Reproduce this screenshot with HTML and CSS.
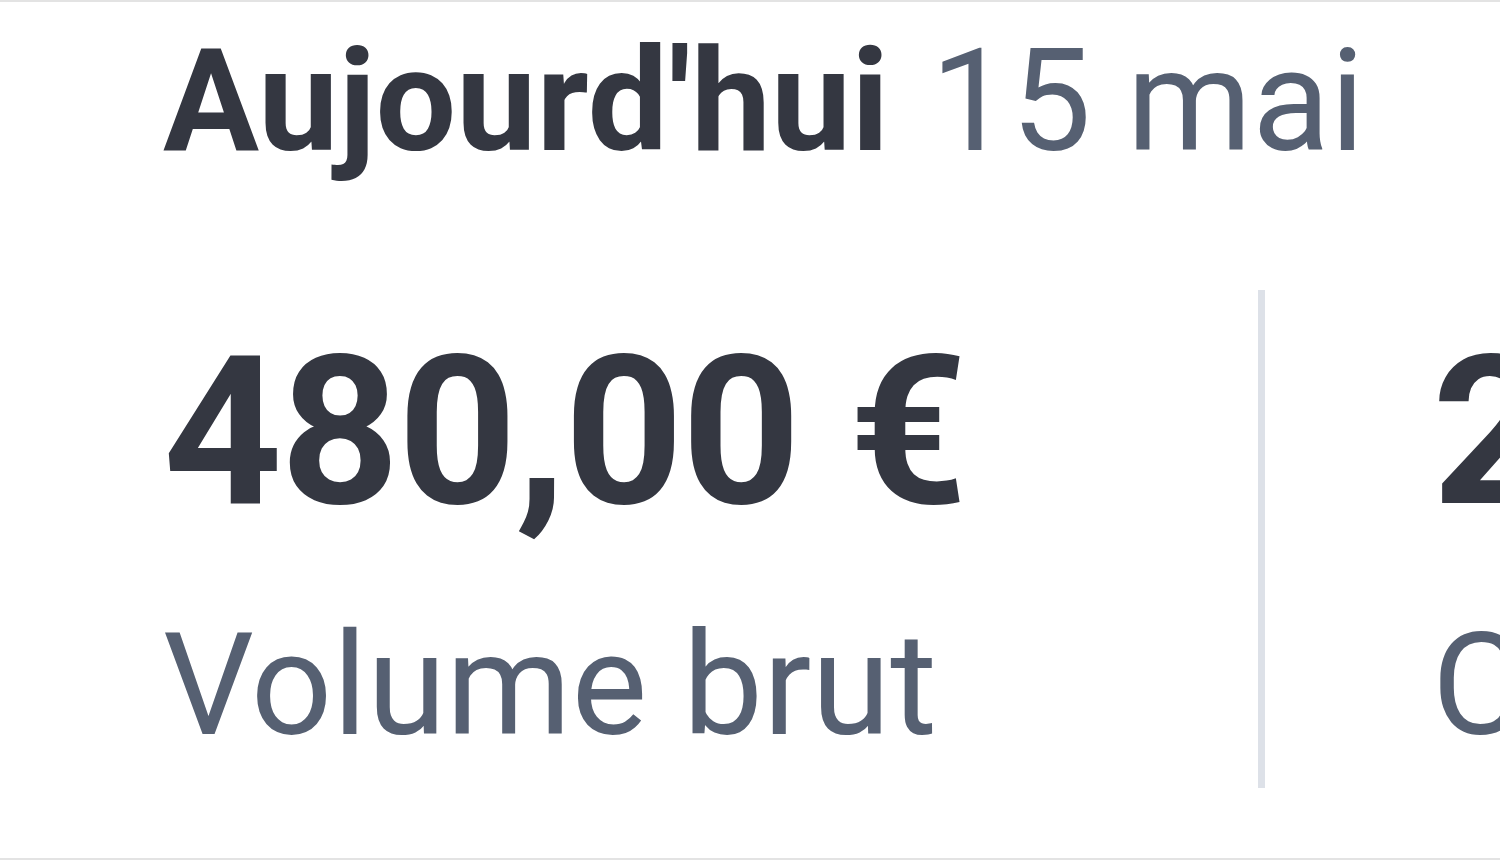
FILE: index.html
```html
<!DOCTYPE html>
<html>
<head>
    <title>Aujourd'hui</title>
    <link rel="stylesheet" href="styles.css">
</head>
<body>
    <div class="card">
        <h2 class="day"><span class="day-name">Aujourd'hui</span> <span class="day-date">15 mai</span></h2>
        <div class="stats">
            <div class="stat">
                <div class="stat-value">480,00 €</div>
                <div class="stat-label">Volume brut</div>
            </div>
            <div class="divider"></div>
            <div class="stat">
                <div class="stat-value">24</div>
                <div class="stat-label">Commandes</div>
            </div>
        </div>
    </div>
</body>
</html>
```

FILE: styles.css
```css
body {
    margin: 0;
    font-family: Roboto, "Liberation Sans", sans-serif;
    background: #ffffff;
    overflow: hidden;
}
.card {
    height: 856px;
    border-top: 2px solid #e3e3e3;
    border-bottom: 2px solid #e3e3e3;
    padding-left: 163px;
    overflow: hidden;
}
.day {
    margin: 0;
    padding-top: 19px;
    font-size: 143px;
    line-height: 160px;
    white-space: nowrap;
}
.day-name {
    font-weight: 700;
    color: #343741;
}
.day-date {
    font-weight: 400;
    color: #566072;
    margin-left: 6px;
}
.stats {
    display: grid;
    grid-template-columns: 1095px 7px max-content;
    margin-top: 109px;
    white-space: nowrap;
}
.stat {
    padding-top: 32px;
}
.stat + .divider + .stat {
    padding-left: 167px;
}
.stat-value {
    font-size: 208px;
    font-weight: 700;
    letter-spacing: -2px;
    color: #343741;
    line-height: 220px;
}
.stat-label {
    font-size: 143px;
    color: #566072;
    line-height: 180px;
    margin-top: 53px;
}
.divider {
    width: 7px;
    height: 498px;
    background: #dde1e8;
}
```
